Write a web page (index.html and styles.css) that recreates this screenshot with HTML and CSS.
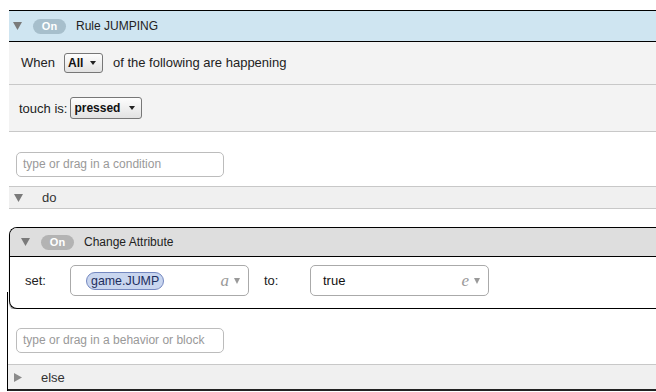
FILE: index.html
```html
<!DOCTYPE html>
<html lang="en">
<head>
    <meta charset="UTF-8">
    <title>Rule JUMPING</title>
    <link rel="stylesheet" href="styles.css">
</head>
<body>
    <div class="rule">
        <div class="rule-head">
            <svg class="tri" width="9" height="8" viewBox="0 0 9 8"><path d="M0 0H9L4.5 8Z" fill="#7a7a7a"/></svg>
            <span class="toggle">On</span>
            <span class="head-title">Rule JUMPING</span>
        </div>

        <div class="cond-row when-row">
            <span class="label">When</span>
            <span class="select sel-all">All <i class="caret"></i></span>
            <span class="label">of the following are happening</span>
        </div>

        <div class="cond-row touch-row">
            <span class="label">touch is:</span>
            <span class="select sel-pressed">pressed <i class="caret"></i></span>
        </div>

        <div class="drop-zone">
            <div class="drop-input">type or drag in a condition</div>
        </div>

        <div class="section-bar">
            <svg class="tri" width="9" height="8" viewBox="0 0 9 8"><path d="M0 0H9L4.5 8Z" fill="#7a7a7a"/></svg>
            <span class="section-name">do</span>
        </div>

        <div class="do-area">
            <div class="behavior">
                <div class="behavior-head">
                    <svg class="tri" width="9" height="8" viewBox="0 0 9 8"><path d="M0 0H9L4.5 8Z" fill="#7a7a7a"/></svg>
                    <span class="toggle toggle-gray">On</span>
                    <span class="head-title">Change Attribute</span>
                </div>
                <div class="behavior-body">
                    <span class="field-label">set:</span>
                    <div class="field">
                        <span class="attr-pill">game.JUMP</span>
                        <span class="field-type">a</span>
                        <i class="mini-caret"></i>
                    </div>
                    <span class="field-label to-label">to:</span>
                    <div class="field">
                        <span class="field-value">true</span>
                        <span class="field-type">e</span>
                        <i class="mini-caret"></i>
                    </div>
                </div>
            </div>

            <div class="tail">
                <div class="drop-zone drop-zone-low">
                    <div class="drop-input">type or drag in a behavior or block</div>
                </div>
                <div class="section-bar else-bar">
                    <svg class="tri" width="8" height="9" viewBox="0 0 8 9"><path d="M0 0L8 4.5L0 9Z" fill="#8a8a8a"/></svg>
                    <span class="section-name">else</span>
                </div>
            </div>
        </div>
    </div>
</body>
</html>
```

FILE: styles.css
```css
* {
    margin: 0;
    padding: 0;
    box-sizing: border-box;
}

body {
    font-family: 'Liberation Sans', Arial, sans-serif;
    font-size: 13px;
    color: #222;
    background: #fff;
    overflow: hidden;
}

.rule {
    margin: 10px 0 0 9px;
    border-top: 1px solid #000;
}

.rule-head {
    height: 31px;
    background: #cfe5f1;
    border-bottom: 1px solid #000;
    display: flex;
    align-items: center;
    padding-left: 4px;
}

.tri {
    display: block;
    flex: none;
}

.toggle {
    width: 33px;
    height: 15px;
    margin-left: 11px;
    border-radius: 8px;
    background: #a7bfcc;
    color: #fff;
    font-size: 11px;
    font-weight: 700;
    line-height: 15px;
    text-align: center;
}

.toggle-gray {
    background: #b3b3b3;
}

.head-title {
    margin-left: 10px;
    font-size: 12px;
    color: #222;
}

.cond-row {
    display: flex;
    align-items: center;
    background: #f3f3f3;
    border-bottom: 1px solid #c8c8c8;
}

.when-row {
    height: 43px;
    padding-left: 12px;
    padding-bottom: 1px;
}

.touch-row {
    height: 47px;
    padding-left: 10px;
}

.label {
    color: #222;
}

.select {
    display: flex;
    align-items: center;
    justify-content: space-between;
    height: 20px;
    margin: 0 10px 0 4px;
    padding: 0 6px 0 3px;
    border: 1px solid #777;
    border-radius: 3px;
    background: linear-gradient(#fdfdfd, #e2e2e2);
    font-size: 12px;
    font-weight: 700;
    color: #111;
}

.sel-all {
    width: 39px;
    margin-left: 9px;
}

.sel-pressed {
    width: 72px;
    margin-left: 3px;
    height: 22px;
}

.caret {
    width: 0;
    height: 0;
    border-left: 3.5px solid transparent;
    border-right: 3.5px solid transparent;
    border-top: 4px solid #222;
}

.drop-zone {
    height: 54px;
    padding: 20px 0 0 7px;
    background: #fff;
}

.drop-input {
    width: 208px;
    height: 25px;
    border: 1px solid #bcbcbc;
    border-radius: 5px;
    padding-left: 6px;
    line-height: 23px;
    font-size: 12px;
    color: #999;
}

.section-bar {
    display: flex;
    align-items: center;
    height: 23px;
    padding-left: 5px;
    background: #f0f0f0;
    border-top: 1px solid #c8c8c8;
    border-bottom: 1px solid #c8c8c8;
}

.section-name {
    margin-left: 19px;
    color: #333;
}

.do-area {
    position: relative;
    padding-top: 18px;
}

/* outer outline edge that shows up to the left of the block */
.do-area::before {
    content: "";
    position: absolute;
    left: -2px;
    top: 83px;
    bottom: 0;
    border-left: 1px solid #000;
}

.behavior {
    border: 1px solid #000;
    border-right: none;
    border-radius: 8px 0 0 8px;
    background: #fff;
    box-shadow: 0 2px 1px rgba(0, 0, 0, 0.35);
    overflow: hidden;
}

.behavior-head {
    height: 29px;
    display: flex;
    align-items: center;
    padding-left: 11px;
    background: #dedede;
    border-bottom: 1px solid #000;
}

.behavior-body {
    height: 51px;
    display: flex;
    align-items: center;
    padding-left: 15px;
    padding-bottom: 4px;
}

.field-label {
    width: 45px;
    flex: none;
    color: #222;
}

.to-label {
    width: 46px;
    margin-left: 15px;
}

.field {
    width: 179px;
    height: 31px;
    flex: none;
    display: flex;
    align-items: center;
    padding: 0 8px 0 15px;
    border: 1px solid #aaa;
    border-radius: 5px;
}

.attr-pill {
    height: 18px;
    padding: 0 4px;
    border: 1px solid #7488c0;
    border-radius: 9px;
    background: #c9d6ef;
    color: #1d2e5e;
    font-size: 12.4px;
    line-height: 16px;
}

.field-value {
    margin-left: -3px;
    color: #111;
}

.field-type {
    margin-left: auto;
    font-family: 'Liberation Serif', 'Times New Roman', serif;
    font-style: italic;
    font-size: 17px;
    color: #9a9a9a;
    line-height: 1;
}

.mini-caret {
    margin-left: 5px;
    width: 0;
    height: 0;
    border-left: 3.5px solid transparent;
    border-right: 3.5px solid transparent;
    border-top: 6px solid #999;
}

.tail {
    margin-left: -2px;
}

.drop-zone-low {
    height: 55px;
    padding: 19px 0 0 9px;
}

.else-bar {
    height: 27px;
    padding-left: 7px;
    border-bottom: 2px solid #222;
}
```
